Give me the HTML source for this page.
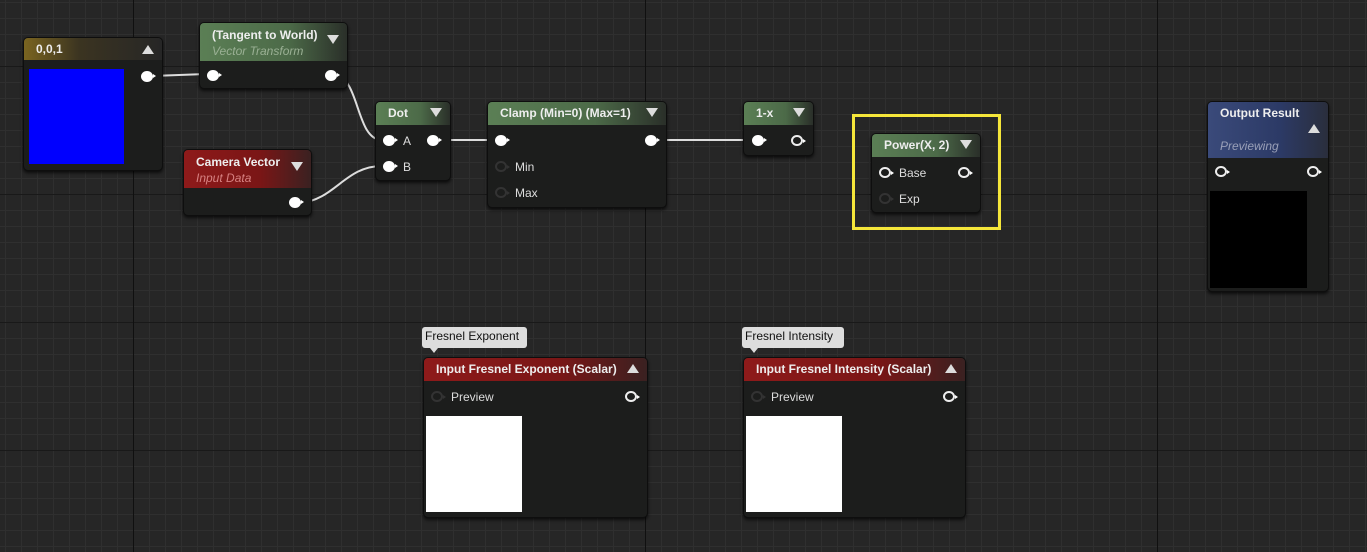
<!DOCTYPE html>
<html><head><meta charset="utf-8"><style>
*{margin:0;padding:0;box-sizing:border-box}
body{width:1367px;height:552px;overflow:hidden;position:relative;font-family:"Liberation Sans",sans-serif;
background-color:#262626;
background-image:
linear-gradient(90deg,#101010 0 1px,transparent 1px),
linear-gradient(0deg,#191919 0 1px,transparent 1px),
linear-gradient(90deg,#2f2f2f 0 1px,transparent 1px),
linear-gradient(0deg,#2f2f2f 0 1px,transparent 1px);
background-size:512px 512px,128px 128px,16px 16px,16px 16px;
background-position:133px 0,0 67px,5px 0,0 3px;}
.n{position:absolute;background:#1c1d1c;border-radius:5px;box-shadow:0 2px 3px rgba(0,0,0,.7);border:1px solid #0e0e0e}
.h{position:relative;border-radius:4px 4px 0 0;color:#eee;font-weight:bold;font-size:12px;padding:4px 12px;height:23px}
.sub{font-style:italic;font-weight:normal;font-size:12px}
.g{background:linear-gradient(90deg,#5b7f55,#4c6a48 60%,#2a2f29)}
.r{background:linear-gradient(90deg,#8e1a1a,#7a1616 60%,#3a2121)}
.y{background:linear-gradient(90deg,#7a6420,#3b3421 40%,#262626)}
.b{background:linear-gradient(90deg,#3a4a7a,#2c3a66 60%,#2a2e3c)}
.tri{position:absolute;right:8px;width:0;height:0;border-left:6px solid transparent;border-right:6px solid transparent}
.dn{border-top:9px solid #ddd}.up{border-bottom:9px solid #ddd}
.p{position:absolute;width:12px;height:11px;border-radius:50%;background:#fff}
.p:after{content:"";position:absolute;right:-3px;top:3px;border-top:2.5px solid transparent;border-bottom:2.5px solid transparent;border-left:3px solid #fff}
.o{background:transparent;border:2px solid #eee}
.o:after{right:-5px;top:2px}
.d{background:transparent;border:2px solid #333}
.d:after{border-left-color:#333;right:-5px;top:2px}
.t{position:absolute;color:#ddd;font-size:12px}
.tip{position:absolute;background:#ddd;color:#111;font-size:12px;border-radius:3px;padding:2px 3px;height:21px}
.tip:after{content:"";position:absolute;left:8px;bottom:-5px;border-left:4px solid transparent;border-right:4px solid transparent;border-top:5px solid #ddd}
</style></head><body>
<svg style="position:absolute;left:0;top:0" width="1367" height="552">
<g stroke="#ddd" stroke-width="2" fill="none">
<path d="M152 76 L206 74"/>
<path d="M336 75 C360 80,356 140,382 140"/>
<path d="M300 203 C335 200,345 166,382 166"/>
<path d="M438 140 L494 140"/>
<path d="M656 140 L751 140"/>
</g>
<rect x="853.5" y="115.5" width="146" height="113" fill="none" stroke="#f5e63a" stroke-width="3"/>
</svg>

<div class="n" style="left:23px;top:37px;width:140px;height:134px">
<div class="h y" style="height:22px">0,0,1<div class="tri up" style="top:7px"></div></div>
<div style="position:absolute;left:5px;top:31px;width:95px;height:95px;background:#0000ff"></div>
<div class="p" style="left:117px;top:33px"></div></div>

<div class="n" style="left:199px;top:22px;width:149px;height:67px">
<div class="h g" style="height:38px;line-height:16px">(Tangent to World)<br><span class="sub" style="color:#9ab094">Vector Transform</span><div class="tri dn" style="top:12px"></div></div>
<div class="p" style="left:7px;top:47px"></div><div class="p" style="left:125px;top:47px"></div></div>

<div class="n" style="left:183px;top:149px;width:129px;height:67px">
<div class="h r" style="height:38px;line-height:16px">Camera Vector<br><span class="sub" style="color:#d68080">Input Data</span><div class="tri dn" style="top:12px"></div></div>
<div class="p" style="left:105px;top:47px"></div></div>

<div class="n" style="left:375px;top:101px;width:76px;height:80px">
<div class="h g">Dot<div class="tri dn" style="top:6px"></div></div>
<div class="p" style="left:7px;top:33px"></div><div class="t" style="left:27px;top:32px">A</div>
<div class="p" style="left:51px;top:33px"></div>
<div class="p" style="left:7px;top:59px"></div><div class="t" style="left:27px;top:58px">B</div></div>

<div class="n" style="left:487px;top:101px;width:180px;height:107px">
<div class="h g">Clamp (Min=0) (Max=1)<div class="tri dn" style="top:6px"></div></div>
<div class="p" style="left:7px;top:33px"></div><div class="p" style="left:157px;top:33px"></div>
<div class="p d" style="left:7px;top:59px"></div><div class="t" style="left:27px;top:58px">Min</div>
<div class="p d" style="left:7px;top:85px"></div><div class="t" style="left:27px;top:84px">Max</div></div>

<div class="n" style="left:743px;top:101px;width:71px;height:55px">
<div class="h g">1-x<div class="tri dn" style="top:6px"></div></div>
<div class="p" style="left:8px;top:33px"></div><div class="p o" style="left:47px;top:33px"></div></div>

<div class="n" style="left:871px;top:133px;width:110px;height:80px">
<div class="h g">Power(X, 2)<div class="tri dn" style="top:6px"></div></div>
<div class="p o" style="left:7px;top:33px"></div><div class="t" style="left:27px;top:32px">Base</div>
<div class="p o" style="left:86px;top:33px"></div>
<div class="p d" style="left:7px;top:59px"></div><div class="t" style="left:27px;top:58px">Exp</div></div>

<div class="n" style="left:1207px;top:101px;width:122px;height:191px">
<div class="h b" style="height:56px">Output Result<div class="sub" style="color:#9aa0b8;position:absolute;top:37px;left:12px">Previewing</div><div class="tri up" style="top:22px"></div></div>
<div class="p o" style="left:7px;top:64px"></div><div class="p o" style="left:99px;top:64px"></div>
<div style="position:absolute;left:2px;top:89px;width:97px;height:97px;background:#000"></div></div>

<div class="tip" style="left:422px;top:327px;width:105px">Fresnel Exponent</div>
<div class="n" style="left:423px;top:357px;width:225px;height:161px">
<div class="h r">Input Fresnel Exponent (Scalar)<div class="tri up" style="top:6px"></div></div>
<div class="p d" style="left:7px;top:33px"></div><div class="t" style="left:27px;top:32px">Preview</div>
<div class="p o" style="left:201px;top:33px"></div>
<div style="position:absolute;left:2px;top:58px;width:96px;height:96px;background:#fff"></div></div>

<div class="tip" style="left:742px;top:327px;width:102px">Fresnel Intensity</div>
<div class="n" style="left:743px;top:357px;width:223px;height:161px">
<div class="h r">Input Fresnel Intensity (Scalar)<div class="tri up" style="top:6px"></div></div>
<div class="p d" style="left:7px;top:33px"></div><div class="t" style="left:27px;top:32px">Preview</div>
<div class="p o" style="left:199px;top:33px"></div>
<div style="position:absolute;left:2px;top:58px;width:96px;height:96px;background:#fff"></div></div>
</body></html>
